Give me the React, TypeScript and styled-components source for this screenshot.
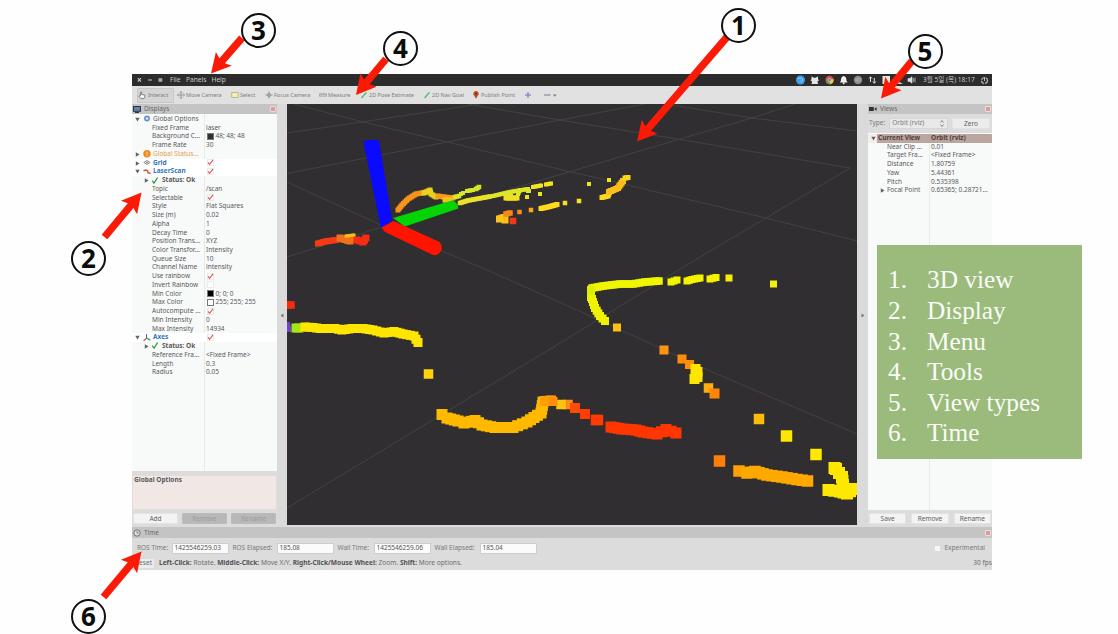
import React from 'react';
import styled, { createGlobalStyle, css } from 'styled-components';

const GlobalStyle = createGlobalStyle`
  * { box-sizing: border-box; }
  body { margin: 0; background: #fefefe; overflow: hidden; }
`;

const Slide = styled.main`
  position: relative;
  width: 1118px;
  height: 634px;
  padding: 74px 0 0 132px;
  overflow: hidden;
  background: #fefefe;
  font-family: 'Noto Sans', 'Open Sans', sans-serif;
  font-size: 6.5px;
  line-height: 8.72px;
  color: #59595b;
  white-space: nowrap;
`;

const Window = styled.section`
  width: 860px;
  height: 496px;
  display: flex;
  flex-direction: column;
  background: #dcdcdc;
`;

const MenuBar = styled.header`
  height: 12px;
  display: flex;
  align-items: center;
  padding: 0 3px 0 5px;
  background: #2d2c2d;
  color: #c9c7c3;
  font-size: 6.6px;
`;

const WindowButtons = styled.div`
  display: flex;
  width: 33px;
  svg { display: block; }
`;

const MenuItem = styled.span<{ $w: number }>`
  width: ${p => p.$w}px;
`;

const Tray = styled.div`
  margin-left: auto;
  display: flex;
  align-items: center;
  svg { display: block; }
`;

const Clock = styled.span`
  width: 57px;
  font-family: 'Noto Sans', 'Noto Sans CJK KR', sans-serif;
  font-size: 6.6px;
`;

const Toolbar = styled.nav`
  height: 18px;
  display: flex;
  align-items: center;
  padding: 0 0 0 5px;
  background: #e2e1e1;
  color: #7d7c7c;
  font-size: 5.5px;
`;

const Tool = styled.div<{ $w: number; $active?: boolean }>`
  width: ${p => p.$w}px;
  height: 15px;
  display: flex;
  align-items: center;
  gap: 1px;
  ${p => p.$active && css`
    gap: 2px;
    margin-right: 3px;
    background: #d6d5d5;
    border: 1px solid #c9c8c8;
    border-radius: 1px;
  `}
  svg { flex: none; }
`;

const Middle = styled.div`
  height: 423px;
  display: flex;
`;

const Dock = styled.aside<{ $w: number }>`
  width: ${p => p.$w}px;
  display: flex;
  flex-direction: column;
`;

const DockTitle = styled.div<{ $h?: number }>`
  height: ${p => p.$h ?? 9.5}px;
  flex: none;
  display: flex;
  align-items: center;
  gap: 3px;
  padding: 1px 1px 0;
  background: #c5c4c4;
  color: #6a6969;
  font-size: 6.5px;
`;

const CloseBox = styled.i`
  width: 6px;
  height: 6px;
  margin-left: auto;
  border: 1.5px solid #ecdede;
  border-radius: 1px;
  background: #dc9a9a;
`;

const Tree = styled.div<{ $h: number; $split: number }>`
  height: ${p => p.$h}px;
  flex: none;
  padding-top: 1.5px;
  background: linear-gradient(90deg, transparent ${p => p.$split}px, #e7eaea ${p => p.$split}px, #e7eaea ${p => p.$split + 1}px, transparent ${p => p.$split + 1}px), #f8fafa;
`;

const TreeRow = styled.div<{ $split: number; $tone?: string; $bold?: boolean; $bg?: string }>`
  height: 8.74px;
  display: grid;
  grid-template-columns: ${p => p.$split + 1}px 1fr;
  align-items: center;
  color: ${p => p.$tone ?? '#59595b'};
  font-weight: ${p => (p.$bold ? 700 : 400)};
  background: ${p => p.$bg ?? 'transparent'};
`;

const NameCell = styled.div<{ $indent: number }>`
  display: flex;
  align-items: center;
  padding-left: ${p => p.$indent}px;
  overflow: hidden;
  svg { flex: none; }
`;

const ValueCell = styled.div`
  display: flex;
  align-items: center;
  gap: 2px;
  padding-left: 1px;
  svg { flex: none; }
`;

const Slot = styled.span<{ $w: number }>`
  width: ${p => p.$w}px;
  flex: none;
  display: flex;
  align-items: center;
`;

const Swatch = styled.i<{ $c: string }>`
  width: 6.5px;
  height: 6.5px;
  margin: -1px 0 0 1px;
  border: 1px solid #777;
  background: ${p => p.$c};
`;

const Check = styled.i`
  width: 7px;
  height: 7px;
  margin: -1px 0 0 1px;
  display: flex;
  align-items: center;
  justify-content: center;
  border: 1px solid #ece9e9;
  background: #fff;
`;

const Description = styled.div`
  height: 35px;
  margin-top: 4px;
  padding: 0 1px;
  background: #f1e8e6;
  border: 1px solid #e3dcdb;
  font-weight: 700;
`;

const ButtonRow = styled.div<{ $top: number; $gap: number }>`
  display: flex;
  gap: ${p => p.$gap}px;
  padding: ${p => p.$top}px 1px 0;
`;

const Button = styled.button<{ $disabled?: boolean }>`
  flex: 1;
  height: 11px;
  padding: 0;
  border: 1px solid ${p => (p.$disabled ? '#bcbbbb' : '#e4e3e3')};
  border-radius: 1px;
  background: ${p => (p.$disabled ? '#b9b8b8' : '#f3f3f3')};
  color: ${p => (p.$disabled ? '#9c9b9b' : '#5f5f5f')};
  font: inherit;
  line-height: 9px;
`;

const Splitter = styled.div<{ $w: number }>`
  width: ${p => p.$w}px;
  flex: none;
  display: flex;
  align-items: center;
  justify-content: center;
  background: #dadada;
`;

const View = styled.div`
  width: 570px;
  height: 421px;
  background: #302e31;
  svg { display: block; }
`;

const TypeRow = styled.div`
  height: 19px;
  flex: none;
  display: flex;
  align-items: center;
  gap: 4px;
  padding: 0 2px 0 1px;
  color: #7c7b7b;
`;

const Select = styled.div`
  width: 60px;
  height: 11px;
  display: flex;
  align-items: center;
  justify-content: space-between;
  padding: 0 3px 0 2px;
  background: #e9e9e9;
  border: 1px solid #d6d5d5;
`;

const ZeroButton = styled(Button)`
  flex: none;
  width: 38px;
  margin-left: auto;
  background: #ececec;
`;

const TimeRow = styled.div`
  height: 18px;
  display: flex;
  align-items: center;
  padding: 2px 7px 0 5px;
  color: #7a7979;
`;

const FieldLabel = styled.label<{ $w: number }>`
  width: ${p => p.$w}px;
`;

const Field = styled.div<{ $mr: number }>`
  width: 57px;
  height: 11px;
  margin-right: ${p => p.$mr}px;
  padding: 0 2px;
  border: 1px solid #cfcece;
  background: #fbfbfb;
  color: #555;
  font-size: 6.5px;
`;

const Experimental = styled.div`
  margin-left: auto;
  display: flex;
  align-items: center;
  gap: 4px;
`;

const SmallBox = styled.i`
  width: 5px;
  height: 5px;
  background: #f7f7f7;
`;

const StatusBar = styled.footer`
  height: 14px;
  display: flex;
  align-items: center;
  padding-top: 1px;
  color: #6d6c6c;
  font-size: 6.6px;
  b { color: #535253; }
`;

const ResetButton = styled.span`
  width: 22px;
  height: 9px;
  margin-right: 5px;
  padding-left: 3px;
  background: #ececec;
`;

const Fps = styled.span`
  margin-left: auto;
`;

const Legend = styled.ol`
  position: absolute;
  left: 877px;
  top: 245px;
  width: 205px;
  height: 214px;
  margin: 0;
  padding: 19.4px 0 0 11px;
  list-style: none;
  background: #9abb7b;
  color: #fbfdf8;
  font: 25.3px/30.6px 'Liberation Serif', serif;
`;

const LegendItem = styled.li`
  display: grid;
  grid-template-columns: 39px 1fr;
`;

const ArrowLayer = styled.svg`
  position: absolute;
  inset: 0;
`;

const Badge = styled.div<{ $x: number; $y: number }>`
  position: absolute;
  left: ${p => p.$x - 17.5}px;
  top: ${p => p.$y - 17.5}px;
  width: 35px;
  height: 35px;
  display: flex;
  align-items: center;
  justify-content: center;
  border: 2px solid #111;
  border-radius: 50%;
  background: #fefefe;
  color: #0c0c0c;
  font: 700 26px/28px 'Noto Sans', sans-serif;
  padding-bottom: 2px;
`;

type Pt = [number, number];

const Tick = ({ color = '#dc5a5d' }: { color?: string }) => (
  <svg width="7" height="7" viewBox="0 0 7 7"><path d="M1 3.3 2.6 5.3 6 .8" fill="none" stroke={color} strokeWidth="1.1" /></svg>
);

const Twisty = ({ open }: { open?: boolean }) => (
  <svg width="5" height="5" viewBox="0 0 5 5"><path d={open ? 'M.3.8h4.4L2.5 4.5Z' : 'M.8.3v4.4L4.5 2.5Z'} fill="#616161" /></svg>
);

const NodeIcon = ({ kind }: { kind: string }) => (
  <svg width="8" height="8" viewBox="0 0.5 8 8">
    {kind === 'gear' && <><circle cx="4" cy="4" r="2.3" fill="#a9c6e6" stroke="#6a93c6" strokeWidth="1.4" /><circle cx="4" cy="4" r=".8" fill="#fff" /></>}
    {kind === 'warn' && <><circle cx="4" cy="4.3" r="3.7" fill="#f08a1d" /><path d="M4 2.1v2.8M4 5.6v1" stroke="#fbe3c4" strokeWidth="1" /></>}
    {kind === 'grid' && <path d="M4 2 7.2 4 4 6 .8 4ZM2.4 3l3.2 2M5.6 3 2.4 5" fill="none" stroke="#777" strokeWidth=".8" />}
    {kind === 'laser' && <path d="M.5 3.2 3 2.6 4.6 3.2 5 5.2 7.6 6" fill="none" stroke="#d94b45" strokeWidth="1.4" />}
    {kind === 'axes' && <><path d="M3.6 4.8V.6" stroke="#4350c0" strokeWidth="1" /><path d="M3.6 4.6.6 7.4" stroke="#d33" strokeWidth="1.2" /><path d="m3.6 4.6 3.8 2" stroke="#3aa848" strokeWidth="1.2" /></>}
    {kind === 'ok' && <path d="M1.2 4.2 3 6.6 6.6 1.2" fill="none" stroke="#2f9a3b" strokeWidth="1.2" />}
  </svg>
);

type Row = {
  name: string; value?: string; depth?: number; icon?: string; open?: boolean;
  tone?: string; bold?: boolean; swatch?: string; check?: boolean; bg?: string;
};

const displayRows: Row[] = [
  { name: 'Global Options', icon: 'gear', open: true },
  { name: 'Fixed Frame', value: 'laser' },
  { name: 'Background C...', value: '48; 48; 48', swatch: '#303030' },
  { name: 'Frame Rate', value: '30' },
  { name: 'Global Status...', icon: 'warn', open: false, tone: '#e3a04c' },
  { name: 'Grid', icon: 'grid', open: false, tone: '#3374bd', bold: true, check: true, bg: '#fff' },
  { name: 'LaserScan', icon: 'laser', open: true, tone: '#3374bd', bold: true, check: true, bg: '#fff' },
  { name: 'Status: Ok', depth: 2, icon: 'ok', open: false, bold: true },
  { name: 'Topic', value: '/scan' },
  { name: 'Selectable', check: true },
  { name: 'Style', value: 'Flat Squares' },
  { name: 'Size (m)', value: '0.02' },
  { name: 'Alpha', value: '1' },
  { name: 'Decay Time', value: '0' },
  { name: 'Position Trans...', value: 'XYZ' },
  { name: 'Color Transfor...', value: 'Intensity' },
  { name: 'Queue Size', value: '10' },
  { name: 'Channel Name', value: 'intensity' },
  { name: 'Use rainbow', check: true },
  { name: 'Invert Rainbow', check: false },
  { name: 'Min Color', value: '0; 0; 0', swatch: '#000' },
  { name: 'Max Color', value: '255; 255; 255', swatch: '#fff' },
  { name: 'Autocompute ...', check: true },
  { name: 'Min Intensity', value: '0' },
  { name: 'Max Intensity', value: '14934' },
  { name: 'Axes', icon: 'axes', open: true, tone: '#3374bd', bold: true, check: true, bg: '#fff' },
  { name: 'Status: Ok', depth: 2, icon: 'ok', open: false, bold: true },
  { name: 'Reference Fra...', value: '<Fixed Frame>' },
  { name: 'Length', value: '0.3' },
  { name: 'Radius', value: '0.05' },
];

const viewRows: Row[] = [
  { name: 'Near Clip ...', value: '0.01' },
  { name: 'Target Fra...', value: '<Fixed Frame>' },
  { name: 'Distance', value: '1.80759' },
  { name: 'Yaw', value: '5.44361' },
  { name: 'Pitch', value: '0.535398' },
  { name: 'Focal Point', value: '0.65365; 0.28721...', open: false },
];

const DisplayRow = ({ row }: { row: Row }) => (
  <TreeRow $split={72} $tone={row.tone} $bold={row.bold} $bg={row.bg}>
    <NameCell $indent={row.icon ? (row.depth === 2 ? 12 : 3) : 20}>
      {row.icon && <Slot $w={row.depth === 2 ? 7 : 8}><Twisty open={row.open} /></Slot>}
      {row.icon && <Slot $w={row.depth === 2 ? 11 : 10}><NodeIcon kind={row.icon} /></Slot>}
      {row.name}
    </NameCell>
    <ValueCell>
      {row.swatch && <Swatch $c={row.swatch} />}
      {row.check !== undefined && <Check>{row.check && <Tick />}</Check>}
      {row.value}
    </ValueCell>
  </TreeRow>
);

const squares = (pts: Pt[], step: number): Pt[] => {
  const out: Pt[] = [];
  pts.slice(1).forEach(([x2, y2], i) => {
    const [x1, y1] = pts[i];
    const n = Math.max(1, Math.round(Math.hypot(x2 - x1, y2 - y1) / step));
    for (let k = 0; k < n; k++) out.push([x1 + ((x2 - x1) * k) / n, y1 + ((y2 - y1) * k) / n]);
  });
  out.push(pts[pts.length - 1]);
  return out;
};

const Trail = ({ pts, size, color }: { pts: Pt[]; size: number; color: string }) => (
  <g fill={color}>
    {squares(pts, size * 0.4).map(([x, y], i) => (
      <rect key={i} x={x - size / 2} y={y - size / 2} width={size} height={size} />
    ))}
  </g>
);

const trails: { pts: Pt[]; size: number; color: string }[] = [
  { pts: [[398, 210], [402, 205], [408, 199], [416, 194], [427, 192]], size: 5, color: '#f8931c' },
  { pts: [[424, 193], [430, 190], [431, 194], [436, 197]], size: 5, color: '#e8d21c' },
  { pts: [[438, 196], [444, 197], [453, 198]], size: 5, color: '#f79a1c' },
  { pts: [[445, 200], [450, 200]], size: 5, color: '#f2c31d' },
  { pts: [[455, 197], [459, 196]], size: 4.5, color: '#d8e62a' },
  { pts: [[461, 194], [463, 193]], size: 4, color: '#d8e62a' },
  { pts: [[467, 191], [473, 190]], size: 4, color: '#d8e62a' },
  { pts: [[476, 189], [479, 187]], size: 4.5, color: '#cfe62a' },
  { pts: [[460, 203], [468, 200.5], [490, 196.5]], size: 4.5, color: '#e8e32a' },
  { pts: [[493, 196], [510, 192], [528, 189]], size: 4, color: '#dfe62a' },
  { pts: [[533, 187], [541, 185.5]], size: 4, color: '#f0e71c' },
  { pts: [[546, 184.5], [551, 183.5]], size: 4, color: '#f0e71c' },
  { pts: [[506, 198], [517, 198]], size: 5, color: '#f5df1c' },
  { pts: [[506, 194], [511, 196]], size: 4, color: '#dfe62a' },
  { pts: [[520, 190], [518, 194]], size: 4, color: '#dfe62a' },
  { pts: [[528, 191], [529, 191]], size: 4, color: '#dfe62a' },
  { pts: [[527, 197]], size: 4, color: '#e8e61c' },
  { pts: [[540, 194]], size: 4, color: '#e8e61c' },
  { pts: [[499.5, 219], [504, 217.5], [505, 220]], size: 7, color: '#ffc21b' },
  { pts: [[506, 214], [510, 213]], size: 5.5, color: '#f7861c' },
  { pts: [[513, 221]], size: 6.5, color: '#f03a17' },
  { pts: [[519.5, 212]], size: 4.5, color: '#f7901c' },
  { pts: [[531, 210]], size: 4.5, color: '#fba31c' },
  { pts: [[541, 208.5], [548, 207], [557, 204.5]], size: 5, color: '#ffdb1c' },
  { pts: [[565, 203]], size: 4.5, color: '#f8e01c' },
  { pts: [[579, 201]], size: 4.5, color: '#f5e61c' },
  { pts: [[589, 184]], size: 4, color: '#eae81c' },
  { pts: [[609, 180]], size: 4, color: '#eae81c' },
  { pts: [[602, 197.5], [608, 196], [610, 191]], size: 5, color: '#fbd91c' },
  { pts: [[609, 192], [618, 188], [623, 181]], size: 6, color: '#ffbd1a' },
  { pts: [[625, 178], [628, 177.5]], size: 5, color: '#f5d81c' },
  { pts: [[318, 243.5], [325, 241.5], [336, 240]], size: 6, color: '#f63a14' },
  { pts: [[340, 238], [350, 241], [352, 238]], size: 7, color: '#f2701b' },
  { pts: [[346, 236], [354, 235]], size: 3, color: '#f5bd1d' },
  { pts: [[357, 240], [363, 242], [366, 238]], size: 7, color: '#f62c12' },

  { pts: [[288, 305], [291, 305]], size: 7.5, color: '#f82b0e' },
  { pts: [[288, 324], [289, 330]], size: 4, color: '#6d45c7' },
  { pts: [[296, 328], [299, 328]], size: 9, color: '#a5e712' },
  { pts: [[305, 327], [313, 327.5], [320, 328.5], [335, 328.5], [342, 330], [352, 328.5], [363, 328.5], [373, 330], [384, 333], [394, 331.5], [403, 334], [414, 336], [418, 342.5]], size: 9, color: '#ffe500' },
  { pts: [[428.5, 374]], size: 9.5, color: '#ffd50a' },
  { pts: [[442, 414.5], [447, 418], [458, 421], [464, 423], [475, 420.5], [482, 425], [495, 427.5], [513, 427.5], [527, 422], [541, 413], [543, 402]], size: 11, color: '#ffba00' },
  { pts: [[545, 401], [551, 400.5]], size: 10, color: '#ff9f08' },
  { pts: [[568, 404.5]], size: 9.5, color: '#ff8a10' },
  { pts: [[561, 404.5]], size: 9.5, color: '#ffc310' },
  { pts: [[553, 401.5]], size: 9, color: '#ff8f0b' },
  { pts: [[575, 408]], size: 10, color: '#ff4a05' },
  { pts: [[585, 414]], size: 10, color: '#ff3d02' },
  { pts: [[596, 420], [598, 420]], size: 10.5, color: '#ff3a02' },
  { pts: [[611, 427], [622, 429], [636, 430], [643, 432], [657, 434], [666, 429.5], [676, 433]], size: 11, color: '#ff3600' },

  { pts: [[592, 288], [603, 286], [620, 284], [633, 284], [645, 282], [659, 281]], size: 7.5, color: '#f0f500' },
  { pts: [[671, 282], [677, 280]], size: 7, color: '#f3f500' },
  { pts: [[687, 281], [692, 279.5], [700, 278]], size: 7, color: '#f5f300' },
  { pts: [[710, 279], [716, 277.5]], size: 7, color: '#f5f300' },
  { pts: [[729, 278]], size: 7, color: '#f7ee05' },
  { pts: [[773.5, 284]], size: 7, color: '#eff210' },
  { pts: [[591, 290], [591, 297]], size: 8, color: '#dcf000' },
  { pts: [[592, 299], [595, 308], [600, 316], [605, 321]], size: 8, color: '#eff200' },
  { pts: [[617, 327.5]], size: 8, color: '#ffbf12' },
  { pts: [[664, 350]], size: 9, color: '#ff9410' },
  { pts: [[682, 359]], size: 9, color: '#ff8b08' },
  { pts: [[689.5, 364.5]], size: 9, color: '#ff8b08' },
  { pts: [[695.5, 369], [697.5, 372], [697.5, 377], [694.5, 379]], size: 10, color: '#ffe600' },
  { pts: [[708.5, 388]], size: 9.5, color: '#ffae0a' },
  { pts: [[714.5, 393.5]], size: 10, color: '#ff8508' },
  { pts: [[759, 419]], size: 10.5, color: '#ffbb0a' },
  { pts: [[786.5, 436]], size: 11.5, color: '#ffe507' },
  { pts: [[816, 454.5]], size: 11.5, color: '#ffe900' },
  { pts: [[834.5, 468], [836, 469], [842, 477], [843, 485]], size: 12, color: '#ffe800' },
  { pts: [[828.5, 490], [840, 491.5], [847, 493.5], [853, 489]], size: 12, color: '#ffe800' },
  { pts: [[719.5, 461]], size: 11.5, color: '#ff7f07' },
  { pts: [[739, 471]], size: 11.5, color: '#ff9f05' },
  { pts: [[747, 473], [755, 471.5], [767, 475], [782, 477], [797, 479.5], [807.5, 481]], size: 11.5, color: '#ffa900' },
];

const gridLines: string[] = [
  'M287 133 362 122 480 104',
  'M294 104 362 121.7 447 142 570 171.7 640 188 766 218 857 241',
  'M287 173.5 447 142 560 120 650 103',
  'M467 104 560 120 679 139.3 850 168',
  'M287 257 385 226 570 171.7 679 139.3 752 118 795 104',
  'M287 182 383 226 487 270 579 311 660 348 703 368 857 434',
  'M850 168 766 218 695 260 570 337 287 508',
  'M665 104 752 118 857 131',
];

const Scene = () => (
  <svg width="570" height="421" viewBox="287 104 570 421">
    <g fill="none" stroke="#434642" strokeWidth=".9">
      {gridLines.map(d => <path key={d} d={d} />)}
    </g>
    {trails.map((t, i) => <Trail key={i} {...t} />)}
    <path d="M363.3 141.5Q371 138.5 379 140.5L392.3 221 381 228Z" fill="#0a0aff" />
    <path d="M393 218 452 200.5Q458 202 458.3 208.5L405 226.5Z" fill="#04d404" />
    <path d="M381.5 227.5 393.5 221 439.5 242Q443 246 441 251 438 256 433 255L385 232Z" fill="#ff1400" />
  </svg>
);

type ToolSpec = { label: string; icon: string; w: number };

const tools: ToolSpec[] = [
  { label: 'Interact', icon: 'hand', w: 37 },
  { label: 'Move Camera', icon: 'move', w: 54 },
  { label: 'Select', icon: 'select', w: 34 },
  { label: 'Focus Camera', icon: 'focus', w: 54 },
  { label: 'Measure', icon: 'ruler', w: 41 },
  { label: '2D Pose Estimate', icon: 'pose', w: 63 },
  { label: '2D Nav Goal', icon: 'pose', w: 49 },
  { label: 'Publish Point', icon: 'pin', w: 52 },
  { label: '', icon: 'plus', w: 19 },
  { label: '', icon: 'minus', w: 20 },
];

const ToolIcon = ({ kind }: { kind: string }) => (
  <svg width={kind === 'minus' ? 15 : 8} height="8" viewBox={kind === 'minus' ? '0 0 15 8' : '0 0 8 8'}>
    {kind === 'hand' && <path d="M2.4 4.6V1.2Q3 .4 3.6 1.2V3.4L6.8 4.2V6.2L6 7.6H3L.8 5Z" fill="#fafafa" stroke="#555" strokeWidth=".7" />}
    {kind === 'move' && <path d="M4 .6V7.4M.4 4H7.6M2.8 1.8 4 .5l1.2 1.3M2.8 6.2 4 7.5l1.2-1.3M1.7 2.8.4 4l1.3 1.2M6.3 2.8 7.6 4 6.3 5.2" fill="none" stroke="#8a8a8a" strokeWidth=".8" />}
    {kind === 'select' && <path d="M.7 1.5H7.3V6.5H.7Z" fill="#f3efb0" stroke="#a5a46b" strokeWidth=".7" />}
    {kind === 'focus' && <><circle cx="4" cy="4" r="1.7" fill="none" stroke="#888" strokeWidth=".7" /><path d="M4 .4V7.6M.4 4H7.6" stroke="#888" strokeWidth=".8" /></>}
    {kind === 'ruler' && <path d="M.4 2.8H7.6V5.2H.4ZM2.2 2.8V4M4 2.8V4M5.8 2.8V4" fill="#d2d2d2" stroke="#8d8d8d" strokeWidth=".6" />}
    {kind === 'pose' && <path d="M1.6 7 6.4 1.4" stroke="#3ec46d" strokeWidth="1.4" />}
    {kind === 'pin' && <><path d="M4 7.8 1.5 3.8A2.7 2.7 0 1 1 6.5 3.8Z" fill="#c4502c" /><circle cx="4" cy="2.8" r="1" fill="#6b2413" /></>}
    {kind === 'plus' && <path d="M4 1V7M1 4H7" stroke="#8d90c2" strokeWidth="1.5" />}
    {kind === 'minus' && <><path d="M1 4H7.5" stroke="#9294b0" strokeWidth="1.4" /><path d="M10 3.6h3.6L11.8 5.8Z" fill="#777" /></>}
  </svg>
);

const TrayIcons = () => (
  <svg width="121" height="10" viewBox="0 0 121 10">
    <circle cx="5.5" cy="5" r="4.5" fill="#3f9fe8" /><path d="M2.5 3.5 6 3l2 2-3 2" stroke="#8bc8f2" fill="none" />
    <path d="M16.5 1.5 19.8 3l3.2-1.5V4l1 1.5-1.5.8.5 2.7H16.6l.4-2.7-1.5-.8 1-1.5Z" fill="#e4e4e4" />
    <circle cx="34.5" cy="5" r="4.2" fill="#dc4a3d" /><path d="M34.5 5 31 7.6A4.2 4.2 0 0 0 35 9.2Z" fill="#38a852" /><path d="M34.5 5 38.6 4A4.2 4.2 0 0 1 35 9.2Z" fill="#f4c52c" /><circle cx="34.5" cy="5" r="1.7" fill="#3e80e0" stroke="#eee" strokeWidth=".6" />
    <path d="M48.7 1Q51.6 1.6 51.4 5.5L52.5 7.6H45L46 5.5Q45.8 1.6 48.7 1Z" fill="#f1f1f1" /><circle cx="48.7" cy="8.2" r="1" fill="#f1f1f1" />
    <circle cx="63" cy="5" r="4.2" fill="#8b8b8b" /><path d="M60.5 4H65.5M60.5 6H65.5" stroke="#bdbdbd" strokeWidth=".8" />
    <path d="M75.5 7V2M74 3.5 75.5 1.8 77 3.5M79.3 3V8M77.8 6.5 79.3 8.3 80.8 6.5" fill="none" stroke="#ddd" strokeWidth="1" />
    <rect x="87.5" y="1" width="7.5" height="8" fill="#e6e6e6" />
    <path d="M102 9V6L108 8.8Z" fill="#e0e0e0" />
    <path d="M113 3.6H114.8L117 1.8V8.2L114.8 6.4H113ZM118.4 3.2V6.8M120 2.4V7.6" fill="#ddd" stroke="#ddd" strokeWidth=".7" />
  </svg>
);

const arrows: { from: Pt; to: Pt }[] = [
  { from: [242, 38], to: [211, 73.5] },
  { from: [386, 59], to: [356, 95] },
  { from: [727, 37], to: [637, 141.5] },
  { from: [912, 61], to: [881, 98.5] },
  { from: [104.5, 237], to: [141.5, 192.5] },
  { from: [103.5, 597], to: [141.5, 551.5] },
];

const Arrow = ({ from, to }: { from: Pt; to: Pt }) => {
  const len = Math.hypot(to[0] - from[0], to[1] - from[1]);
  const angle = (Math.atan2(to[1] - from[1], to[0] - from[0]) * 180) / Math.PI;
  return (
    <path
      transform={`translate(${from[0]} ${from[1]}) rotate(${angle})`}
      d={`M0-3.7H${len - 17}L${len - 19.5}-10.5 ${len} 0 ${len - 19.5} 10.5 ${len - 17} 3.7H0Z`}
      fill="#fb1a05"
    />
  );
};

const badges: { n: number; x: number; y: number }[] = [
  { n: 1, x: 738.5, y: 25.5 },
  { n: 2, x: 88.5, y: 258.5 },
  { n: 3, x: 258.5, y: 30.5 },
  { n: 4, x: 400.5, y: 48.5 },
  { n: 5, x: 925, y: 51.5 },
  { n: 6, x: 88.5, y: 616.5 },
];

const legend = ['3D view', 'Display', 'Menu', 'Tools', 'View types', 'Time'];

export default function App() {
  return (
    <>
      <GlobalStyle />
      <Slide>
        <Window>
          <MenuBar>
            <WindowButtons>
              <svg width="28" height="6" viewBox="0 0 28 6">
                <path d="M.8 1.2 4 4.6M4 1.2.8 4.6M11 3H15" stroke="#c9c7c3" strokeWidth="1.2" />
                <rect x="21.5" y="1.2" width="3.8" height="3.6" fill="#a9a8a5" />
              </svg>
            </WindowButtons>
            <MenuItem $w={16}>File</MenuItem>
            <MenuItem $w={25.5}>Panels</MenuItem>
            <MenuItem $w={20}>Help</MenuItem>
            <Tray>
              <TrayIcons />
              <Slot $w={7} />
              <Clock>3월 5일 (목) 18:17</Clock>
              <svg width="9" height="9" viewBox="0 0 9 9"><circle cx="4.5" cy="4.5" r="3" fill="none" stroke="#bbb" strokeWidth="1.2" strokeDasharray="4 1" /><path d="M4.5 1V5" stroke="#bbb" /></svg>
            </Tray>
          </MenuBar>
          <Toolbar>
            {tools.map((t, i) => (
              <Tool key={i} $w={t.w} $active={i === 0}>
                <ToolIcon kind={t.icon} />
                {t.label}
              </Tool>
            ))}
          </Toolbar>
          <Middle>
            <Dock $w={145}>
              <DockTitle>
                <svg width="8" height="7" viewBox="0 0 8 7"><rect x=".5" y=".5" width="7" height="4.8" fill="#5d83b8" stroke="#333" /><path d="M2 6.5H6" stroke="#333" /></svg>
                Displays
                <CloseBox />
              </DockTitle>
              <Tree $h={357} $split={72}>
                {displayRows.map((row, i) => <DisplayRow key={i} row={row} />)}
              </Tree>
              <Description>Global Options</Description>
              <ButtonRow $top={3} $gap={4}>
                <Button>Add</Button>
                <Button $disabled>Remove</Button>
                <Button $disabled>Rename</Button>
              </ButtonRow>
            </Dock>
            <Splitter $w={10}>
              <svg width="4" height="5" viewBox="0 0 4 5"><path d="M3.5.5v4L.5 2.5Z" fill="#777" /></svg>
            </Splitter>
            <View><Scene /></View>
            <Splitter $w={11}>
              <svg width="4" height="5" viewBox="0 0 4 5"><path d="M.5.5v4L3.5 2.5Z" fill="#777" /></svg>
            </Splitter>
            <Dock $w={124}>
              <DockTitle>
                <svg width="8" height="6" viewBox="0 0 8 6"><path d="M0 1H4.8V5H0ZM5.2 3 7.6 1V5Z" fill="#333" /></svg>
                Views
                <CloseBox />
              </DockTitle>
              <TypeRow>
                Type:
                <Select>
                  Orbit (rviz)
                  <svg width="4" height="7" viewBox="0 0 4 7"><path d="M.5 2.5 2 .5l1.5 2M.5 4.5 2 6.5l1.5-2" fill="none" stroke="#777" strokeWidth=".9" /></svg>
                </Select>
                <ZeroButton>Zero</ZeroButton>
              </TypeRow>
              <Tree $h={377} $split={61}>
                <TreeRow $split={61} $bold $tone="#51413c" $bg="linear-gradient(90deg, #f2eeec 9px, #baa69e 9px)">
                  <NameCell $indent={3}><Slot $w={7}><Twisty open /></Slot>Current View</NameCell>
                  <ValueCell>Orbit (rviz)</ValueCell>
                </TreeRow>
                {viewRows.map(r => (
                  <TreeRow key={r.name} $split={61}>
                    <NameCell $indent={r.open === false ? 12 : 19}>
                      {r.open === false && <Slot $w={7}><Twisty /></Slot>}
                      {r.name}
                    </NameCell>
                    <ValueCell>{r.value}</ValueCell>
                  </TreeRow>
                ))}
              </Tree>
              <ButtonRow $top={3} $gap={5}>
                <Button>Save</Button>
                <Button>Remove</Button>
                <Button>Rename</Button>
              </ButtonRow>
            </Dock>
          </Middle>
          <DockTitle $h={11}>
            <svg width="8" height="8" viewBox="0 0 8 8"><circle cx="4" cy="4" r="3.2" fill="#ddd" stroke="#666" strokeWidth=".9" /><path d="M4 2V4H5.6" fill="none" stroke="#666" strokeWidth=".7" /></svg>
            Time
            <CloseBox />
          </DockTitle>
          <TimeRow>
            <FieldLabel $w={34.5}>ROS Time:</FieldLabel><Field $mr={4}>1425546259.03</Field>
            <FieldLabel $w={44}>ROS Elapsed:</FieldLabel><Field $mr={4}>185.08</Field>
            <FieldLabel $w={36}>Wall Time:</FieldLabel><Field $mr={4}>1425546259.06</Field>
            <FieldLabel $w={45}>Wall Elapsed:</FieldLabel><Field $mr={4}>185.04</Field>
            <Experimental><SmallBox />Experimental</Experimental>
          </TimeRow>
          <StatusBar>
            <ResetButton>Reset</ResetButton>
            <span>
              <b>Left-Click:</b> Rotate. <b>Middle-Click:</b> Move X/Y. <b>Right-Click/Mouse Wheel:</b> Zoom. <b>Shift:</b> More options.
            </span>
            <Fps>30 fps</Fps>
          </StatusBar>
        </Window>
        <Legend>
          {legend.map((text, i) => (
            <LegendItem key={text}><span>{i + 1}.</span><span>{text}</span></LegendItem>
          ))}
        </Legend>
        <ArrowLayer width="1118" height="634" viewBox="0 0 1118 634">
          {arrows.map((a, i) => <Arrow key={i} {...a} />)}
        </ArrowLayer>
        {badges.map(b => <Badge key={b.n} $x={b.x} $y={b.y}>{b.n}</Badge>)}
      </Slide>
    </>
  );
}
